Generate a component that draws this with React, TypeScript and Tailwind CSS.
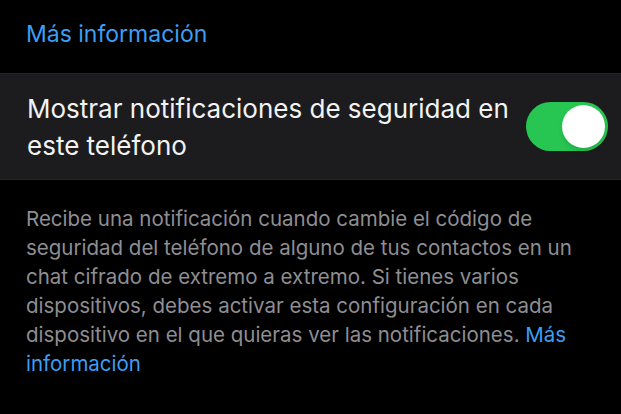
export default function App() {
  return (
    <div
      className="w-[621px] h-[414px] bg-black overflow-hidden"
      style={{ fontFamily: "Inter, 'Noto Sans', sans-serif" }}
    >
      <div className="px-[26px] pt-[20px] h-[73px]">
        <a className="text-[23px] leading-[28px] text-[#3b9ef3]">Más información</a>
      </div>

      <div className="bg-[#1c1c1e] h-[107px] flex items-center pl-[27px] pr-[13px] border-y border-[#262628]">
        <div className="flex-1 text-[26px] leading-[37px] text-[#f2f2f2]">
          Mostrar notificaciones de seguridad en
          <br />
          este teléfono
        </div>
        <button className="w-[82px] h-[49px] rounded-full bg-[#27c551] p-[3px] flex justify-end shrink-0">
          <span className="w-[43px] h-[43px] rounded-full bg-white shadow-md" />
        </button>
      </div>

      <p className="pl-[26px] pt-[24px] pr-[30px] text-[20.5px] leading-[29px] text-[#8e8e93]">
        Recibe una notificación cuando cambie el código de seguridad del teléfono de alguno de tus
        contactos en un chat cifrado de extremo a extremo. Si tienes varios dispositivos, debes
        activar esta configuración en cada dispositivo en el que quieras ver las notificaciones.{" "}
        <span className="text-[#3b9ef3]">Más información</span>
      </p>
    </div>
  );
}
